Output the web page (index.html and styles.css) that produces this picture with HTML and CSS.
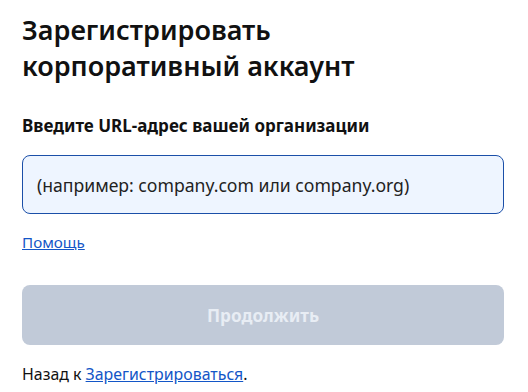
FILE: index.html
```html
<!DOCTYPE html>
<html lang="ru">
<head>
<meta charset="utf-8">
<link rel="stylesheet" href="styles.css">
</head>
<body>
<main class="page">
  <h1 class="title">Зарегистрировать корпоративный аккаунт</h1>
  <label class="label" for="org">Введите URL-адрес вашей организации</label>
  <div class="input">(например: company.com или company.org)</div>
  <a class="help" href="#">Помощь</a>
  <button class="btn" type="button" disabled>Продолжить</button>
  <p class="back">Назад к <a href="#">Зарегистрироваться</a>.</p>
</main>
</body>
</html>
```
FILE: styles.css
```css
html, body { margin: 0; padding: 0; background: #fff; }
body { font-family: "Noto Sans", "Liberation Sans", sans-serif; color: #1a1a1a; }
.page { width: 482px; padding: 12px 0 0 22px; display: flex; flex-direction: column; align-items: flex-start; }
.title { margin: 0; font-size: 27px; font-weight: 600; line-height: 36px; width: 360px; color: #111; }
.label { margin-top: 30px; font-size: 17px; font-weight: 700; line-height: 24px; color: #111; }
.input { box-sizing: border-box; margin-top: 17px; width: 100%; height: 59px; border: 1px solid #1b4fa8; border-radius: 8px; background: #eef5ff; display: flex; align-items: center; padding-left: 14px; font-size: 17.6px; color: #222; }
.help { margin-top: 17px; font-size: 15.2px; color: #1356c7; line-height: 22px; }
.btn { margin-top: 32px; width: 100%; height: 60px; border: none; border-radius: 8px; background: #c1cad8; color: #e8edf4; font-family: inherit; font-size: 17.2px; font-weight: 700; }
.back { margin: 18px 0 0; font-size: 15.9px; line-height: 22px; color: #111; }
.back a { color: #1356c7; }
```
